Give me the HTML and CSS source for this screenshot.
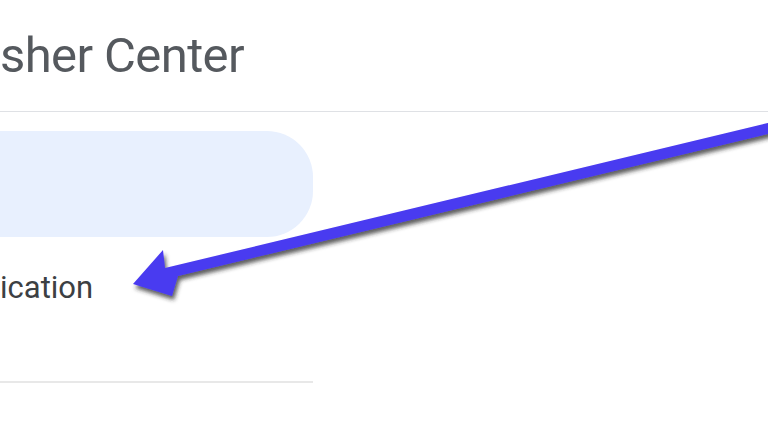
FILE: index.html
```html
<!DOCTYPE html>
<html lang="en">
<head>
<meta charset="utf-8">
<title>Publisher Center</title>
<link rel="stylesheet" href="styles.css">
</head>
<body>
<div class="page">
  <header class="topbar">
    <h1 class="title">sher Center</h1>
  </header>
  <div class="content">
    <nav class="sidebar">
      <div class="nav-active"></div>
      <div class="nav-item">ication</div>
      <div class="nav-divider"></div>
    </nav>
  </div>
  <svg class="annotation" width="768" height="432" viewBox="0 0 768 432" aria-hidden="true">
    <defs>
      <filter id="shadow" x="-10%" y="-20%" width="130%" height="160%">
        <feDropShadow dx="2" dy="4" stdDeviation="2" flood-color="#2a2a2a" flood-opacity="0.75"/>
      </filter>
    </defs>
    <polygon filter="url(#shadow)" fill="#4a3af0"
      points="133,284 163,250 165,268 790,117.7 790,128.7 178,276 172,296"/>
  </svg>
</div>
</body>
</html>
```
FILE: styles.css
```css
html, body {
  margin: 0;
  padding: 0;
  background: #ffffff;
}

.page {
  position: relative;
  width: 768px;
  height: 432px;
  overflow: hidden;
  font-family: Roboto, "Noto Sans", "Liberation Sans", sans-serif;
}

.topbar {
  height: 111px;
  border-bottom: 1px solid #dfe1e5;
  box-sizing: content-box;
}

.title {
  margin: 0;
  padding-top: 26px;
  font-size: 49px;
  line-height: 60px;
  font-weight: 400;
  letter-spacing: -0.6px;
  color: #55595e;
  white-space: nowrap;
}

.content {
  display: flex;
}

.sidebar {
  width: 313px;
  display: flex;
  flex-direction: column;
}

.nav-active {
  margin-top: 19px;
  height: 106px;
  background: #e8f0fe;
  border-radius: 0 46px 46px 0;
}

.nav-item {
  margin-top: 31px;
  font-size: 31px;
  line-height: 40px;
  color: #3c4043;
  white-space: nowrap;
}

.nav-divider {
  margin-top: 73px;
  height: 2px;
  background: #e8e8e8;
}

.annotation {
  position: absolute;
  left: 0;
  top: 0;
  pointer-events: none;
}
```
